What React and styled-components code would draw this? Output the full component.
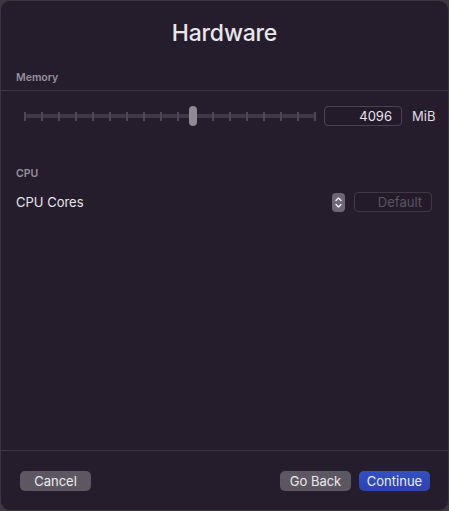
import React from "react";
import styled, { createGlobalStyle } from "styled-components";

const GlobalStyle = createGlobalStyle`
  html, body {
    margin: 0;
    padding: 0;
    background: #3d3842;
  }
  body {
    font-family: Inter, "Noto Sans", "Liberation Sans", sans-serif;
    -webkit-font-smoothing: antialiased;
  }
`;

const Window = styled.div`
  box-sizing: border-box;
  width: 449px;
  height: 511px;
  display: flex;
  flex-direction: column;
  background: #251d2b;
  border: 1px solid #3b3441;
  border-radius: 10px;
  overflow: hidden;
  color: #e6e3e9;
`;

const Title = styled.h1`
  margin: 0;
  height: 63px;
  display: flex;
  align-items: center;
  justify-content: center;
  font-size: 23px;
  font-weight: 500;
  letter-spacing: -0.2px;
  color: #e8e6ea;
`;

const SectionLabel = styled.div`
  display: flex;
  align-items: center;
  height: ${(p) => p.$height || 26}px;
  margin-top: ${(p) => p.$top || 0}px;
  padding-left: 15px;
  font-size: 10.5px;
  font-weight: 600;
  color: #96909c;
  border-bottom: ${(p) => (p.$divider ? "1px solid #3b3441" : "none")};
`;

const SliderRow = styled.div`
  display: flex;
  align-items: center;
  height: 50px;
  padding: 0 12px 0 23px;
`;

const Slider = styled.div`
  position: relative;
  width: 292px;
  height: 20px;
  display: flex;
  align-items: center;
  justify-content: space-between;

  &::before {
    content: "";
    position: absolute;
    left: 0;
    right: 0;
    top: 8px;
    height: 4px;
    background: #3f3846;
  }
`;

const Tick = styled.span`
  position: relative;
  width: 2px;
  height: 9px;
  background: #4d4655;
`;

const Thumb = styled.span`
  position: absolute;
  top: 0;
  width: 8px;
  height: 20px;
  border-radius: 4px;
  background: #8e8993;
`;

const Field = styled.div`
  box-sizing: border-box;
  width: 78px;
  height: 20px;
  display: flex;
  align-items: center;
  justify-content: flex-end;
  padding-right: 9px;
  border: 1px solid ${(p) => (p.$disabled ? "#3f3845" : "#4a4350")};
  border-radius: 4px;
  background: #231b29;
  font-size: 13px;
  color: ${(p) => (p.$disabled ? "#5b5561" : "#e8e6ea")};
`;

const Unit = styled.span`
  margin-left: 10px;
  font-size: 13px;
  color: #e0dde3;
`;

const Row = styled.div`
  display: flex;
  align-items: center;
  height: 24px;
  margin-top: ${(p) => p.$top || 0}px;
  padding: 0 16px 0 15px;
  font-size: 13px;
  color: #e8e6ea;
`;

const RowLabel = styled.span`
  flex: 1;
`;

const Stepper = styled.div`
  width: 13px;
  height: 19px;
  margin-right: 9px;
  border-radius: 4px;
  background: #6d6773;
  display: flex;
  align-items: center;
  justify-content: center;
`;

const Spacer = styled.div`
  flex: 1;
`;

const Footer = styled.div`
  box-sizing: border-box;
  height: 60px;
  border-top: 1px solid #3b3441;
  display: flex;
  align-items: center;
  padding: 1px 18px 0 19px;
  gap: 8px;
`;

const Button = styled.button`
  width: 71px;
  height: 20px;
  padding: 0;
  border: none;
  border-radius: 5px;
  font-family: inherit;
  font-size: 13px;
  color: #ebe9ee;
  background: ${(p) => (p.$primary ? "linear-gradient(#3550c4, #2c42ad)" : "#5c5760")};
  margin-left: ${(p) => (p.$push ? "auto" : "0")};
`;

const TICKS = 18;
const SLIDER_WIDTH = 292;
const THUMB = 8;

function MemorySlider({ position }) {
  const left = Math.round(position * (SLIDER_WIDTH - THUMB));
  return (
    <Slider>
      {Array.from({ length: TICKS }, (_, i) => (
        <Tick key={i} />
      ))}
      <Thumb style={{ left }} />
    </Slider>
  );
}

const App = () => {
  return (
    <>
      <GlobalStyle />
      <Window>
        <Title>Hardware</Title>
        <SectionLabel $divider>Memory</SectionLabel>
        <SliderRow>
          <MemorySlider position={0.58} />
          <Field style={{ marginLeft: 8 }}>4096</Field>
          <Unit>MiB</Unit>
        </SliderRow>
        <SectionLabel $top={20} $height={24}>
          CPU
        </SectionLabel>
        <Row $top={5}>
          <RowLabel>CPU Cores</RowLabel>
          <Stepper>
            <svg width="9" height="15" viewBox="0 0 9 15" fill="none">
              <path d="M2 5.5 L4.5 3 L7 5.5" stroke="#f2f0f4" strokeWidth="1.4" strokeLinecap="round" strokeLinejoin="round" />
              <path d="M2 9.5 L4.5 12 L7 9.5" stroke="#f2f0f4" strokeWidth="1.4" strokeLinecap="round" strokeLinejoin="round" />
            </svg>
          </Stepper>
          <Field $disabled>Default</Field>
        </Row>
        <Spacer />
        <Footer>
          <Button>Cancel</Button>
          <Button $push>Go Back</Button>
          <Button $primary>Continue</Button>
        </Footer>
      </Window>
    </>
  );
};

export default App;
